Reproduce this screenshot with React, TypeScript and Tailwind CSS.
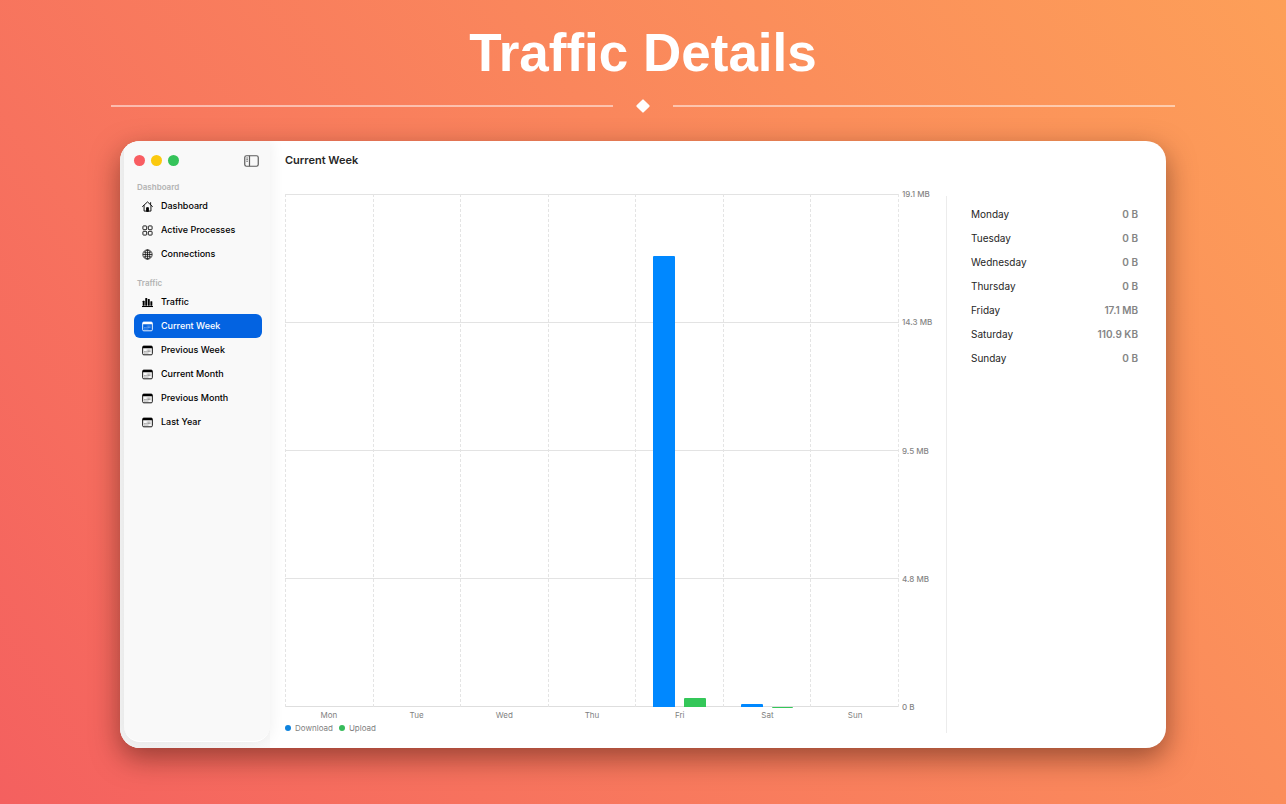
import React, { useState } from 'react';

type IconProps = { className?: string };

const HomeIcon: React.FC<IconProps> = ({ className }) => (
    <svg viewBox="0 0 24 24" className={className} fill="none" stroke="currentColor" strokeWidth="2" strokeLinecap="round" strokeLinejoin="round" aria-hidden="true">
        <path d="M1.2 12 12 2 22.8 12" />
        <path d="M4.5 10v12h15V10" />
        <path d="M18.8 7.5V3.5" />
        <path d="M10 22v-7.5h4V22z" fill="currentColor" />
    </svg>
);

const GridIcon: React.FC<IconProps> = ({ className }) => (
    <svg viewBox="0 0 24 24" className={className} fill="none" stroke="currentColor" strokeWidth="1.9" aria-hidden="true">
        <rect x="2" y="2" width="8.2" height="8.2" rx="1.5" />
        <rect x="13.8" y="2" width="8.2" height="8.2" rx="1.5" />
        <rect x="2" y="13.8" width="8.2" height="8.2" rx="1.5" />
        <rect x="13.8" y="13.8" width="8.2" height="8.2" rx="1.5" />
    </svg>
);

const GlobeIcon: React.FC<IconProps> = ({ className }) => (
    <svg viewBox="0 0 24 24" className={className} fill="none" stroke="currentColor" strokeWidth="1.6" aria-hidden="true">
        <circle cx="12" cy="12" r="10.2" />
        <ellipse cx="12" cy="12" rx="5" ry="10" />
        <path d="M2 12h20M12 2v20M4 6.5c4.5 2.5 11.5 2.5 16 0M4 17.5c4.5-2.5 11.5-2.5 16 0" />
    </svg>
);

const BarsIcon: React.FC<IconProps> = ({ className }) => (
    <svg viewBox="0 0 24 24" className={className} fill="currentColor" aria-hidden="true">
        <rect x="1.5" y="8" width="4.2" height="11" rx="1" />
        <rect x="7.1" y="2" width="4.2" height="17" rx="1" />
        <rect x="12.7" y="4.5" width="4.2" height="14.5" rx="1" />
        <rect x="18.3" y="9" width="4.2" height="10" rx="1" />
        <rect x="0" y="19.5" width="24" height="2.4" />
    </svg>
);

const CalendarIcon: React.FC<IconProps> = ({ className }) => (
    <svg viewBox="0 0 24 24" className={className} fill="none" aria-hidden="true">
        <rect x="1.4" y="2.4" width="21.2" height="19" rx="2.5" stroke="currentColor" strokeWidth="2" />
        <path d="M1.4 7V4.9a2.5 2.5 0 0 1 2.5-2.5h16.2a2.5 2.5 0 0 1 2.5 2.5V7z" fill="currentColor" />
        <path d="M10.4 11.2h8.8M5 14.4h14.2M5 17.6h8.8" stroke="currentColor" strokeWidth="2" strokeDasharray="1.9 0.8" opacity="0.5" />
    </svg>
);

const SidebarIcon: React.FC<IconProps> = ({ className }) => (
    <svg viewBox="0 0 30 24" className={className} fill="none" stroke="currentColor" strokeWidth="2.4" aria-hidden="true">
        <rect x="1.5" y="1.5" width="27" height="21" rx="3.5" />
        <path d="M11 1.5v21" />
        <path d="M4.5 6h3.5M4.5 9.3h3.5M4.5 12.6h3.5" strokeWidth="1.6" />
    </svg>
);

const sections = [
    {
        title: 'Dashboard',
        items: [
            { label: 'Dashboard', Icon: HomeIcon },
            { label: 'Active Processes', Icon: GridIcon },
            { label: 'Connections', Icon: GlobeIcon },
        ],
    },
    {
        title: 'Traffic',
        items: [
            { label: 'Traffic', Icon: BarsIcon },
            { label: 'Current Week', Icon: CalendarIcon },
            { label: 'Previous Week', Icon: CalendarIcon },
            { label: 'Current Month', Icon: CalendarIcon },
            { label: 'Previous Month', Icon: CalendarIcon },
            { label: 'Last Year', Icon: CalendarIcon },
        ],
    },
];

// download and upload are percentages of the top of the axis
const days = [
    { name: 'Monday', short: 'Mon', total: '0 B', download: 0, upload: 0 },
    { name: 'Tuesday', short: 'Tue', total: '0 B', download: 0, upload: 0 },
    { name: 'Wednesday', short: 'Wed', total: '0 B', download: 0, upload: 0 },
    { name: 'Thursday', short: 'Thu', total: '0 B', download: 0, upload: 0 },
    { name: 'Friday', short: 'Fri', total: '17.1 MB', download: 88, upload: 1.7 },
    { name: 'Saturday', short: 'Sat', total: '110.9 KB', download: 0.5, upload: 0.05 },
    { name: 'Sunday', short: 'Sun', total: '0 B', download: 0, upload: 0 },
];

const axisLabels = ['19.1 MB', '14.3 MB', '9.5 MB', '4.8 MB', '0 B'];

const Sidebar: React.FC<{ active: string; onSelect: (label: string) => void }> = ({ active, onSelect }) => (
    <aside className="w-[150px] shrink-0 bg-linear-to-r from-[#f3f3f3] to-[#fafafa] pl-1 pb-[6px] flex">
        <div className="flex-1 rounded-b-2xl bg-[#f9f9f9] border-b border-white shadow-[0_0_16px_rgba(0,0,0,0.07)] pl-[10px] pr-2">
            <div className="h-[39px] flex items-center justify-between pr-[3px]">
                <div className="flex gap-[6px]">
                    <button aria-label="Close" className="w-[11px] h-[11px] rounded-full bg-[#f95d62]" />
                    <button aria-label="Minimize" className="w-[11px] h-[11px] rounded-full bg-[#fbc90e]" />
                    <button aria-label="Zoom" className="w-[11px] h-[11px] rounded-full bg-[#35c35a]" />
                </div>
                <button aria-label="Toggle sidebar" className="text-[#5c5c5c]">
                    <SidebarIcon className="w-[15px] h-3" />
                </button>
            </div>
            <nav className="flex flex-col gap-[10px]">
                {sections.map((section) => (
                    <div key={section.title}>
                        <h2 className="h-[14px] pl-[3px] text-[8px] leading-[14px] font-semibold text-[#b3b3b3]">{section.title}</h2>
                        {section.items.map(({ label, Icon }) => (
                            <button
                                key={label}
                                onClick={() => onSelect(label)}
                                className={`w-full h-6 pl-2 flex items-center gap-2 rounded-md text-[9px] font-medium whitespace-nowrap ${label === active ? 'bg-[#0363e1] text-white' : 'text-black'}`}
                            >
                                <Icon className="w-[11px] h-[11px]" />
                                <span>{label}</span>
                            </button>
                        ))}
                    </div>
                ))}
            </nav>
        </div>
    </aside>
);

const TrafficChart: React.FC = () => (
    <div className="flex-1 flex flex-col">
        <div className="flex-1 flex">
            <div className="flex-1 grid">
                {/* Horizontal lines */}
                <div className="col-start-1 row-start-1 flex flex-col border-b border-[#dedede]">
                    {axisLabels.slice(1).map((label) => (
                        <div key={label} className="flex-1 border-t border-[#e3e3e3]" />
                    ))}
                </div>
                {/* Day columns */}
                <div className="col-start-1 row-start-1 grid grid-cols-7 border-r border-dashed border-[#e6e6e6]">
                    {days.map((day) => (
                        <div key={day.name} className="border-l border-dashed border-[#e4e4e4] flex items-end justify-center gap-[9px]">
                            <div className="w-1/4 rounded-t-[1px] bg-[#0088ff]" style={{ height: `${day.download}%` }} />
                            <div className="w-1/4 rounded-t-[1px] bg-[#34c759]" style={{ height: `${day.upload}%` }} />
                        </div>
                    ))}
                </div>
            </div>
            <div className="w-[47px] pl-[3px] flex flex-col justify-between text-[8px] font-medium text-[#858585]">
                {axisLabels.map((label) => (
                    <span key={label} className="h-[10px] -my-[5px] leading-[10px]">{label}</span>
                ))}
            </div>
        </div>
        <div className="h-4 pr-[47px] grid grid-cols-7 text-center text-[8px] leading-4 text-[#7f7f7f]">
            {days.map((day) => (
                <span key={day.name}>{day.short}</span>
            ))}
        </div>
        <div className="h-[10px] mb-[2px] flex items-center gap-[6px] text-[8px] leading-[10px] text-[#7f7f7f]">
            <span className="flex items-center gap-1">
                <i className="w-[6px] h-[6px] rounded-full bg-[#0f83dd]" />
                Download
            </span>
            <span className="flex items-center gap-1">
                <i className="w-[6px] h-[6px] rounded-full bg-[#37bb5b]" />
                Upload
            </span>
        </div>
    </div>
);

const DayTotals: React.FC = () => (
    <div className="w-[220px] shrink-0 mt-[2px] mb-[2px] pt-[6px] pl-6 pr-7 border-l border-[#ececec]">
        <table className="w-full text-[10px]">
            <tbody>
                {days.map((day) => (
                    <tr key={day.name} className="h-6">
                        <th scope="row" className="text-left font-normal text-[#262626]">{day.name}</th>
                        <td className="text-right font-semibold text-[#858585]">{day.total}</td>
                    </tr>
                ))}
            </tbody>
        </table>
    </div>
);

const App: React.FC = () => {
    const [active, setActive] = useState('Current Week');

    return (
        <div className="min-h-screen flex flex-col px-[111px] pb-14 bg-linear-55 from-[#f4605f] to-[#fd9f58] font-['Inter',sans-serif]">
            <h1 className="pt-[23px] text-center text-[53px] leading-[60px] font-bold text-white font-['Liberation_Sans',sans-serif]">Traffic Details</h1>
            <div className="h-[46px] flex items-center gap-[25px]">
                <div className="flex-1 h-[2px] bg-white/50" />
                <div className="w-[10px] h-[10px] rotate-45 rounded-[1px] bg-white" />
                <div className="flex-1 h-[2px] bg-white/50" />
            </div>

            <div className="flex-1 mt-3 mx-[9px] flex rounded-[20px] overflow-hidden bg-white shadow-[0_10px_28px_rgba(60,20,10,0.5)]">
                <Sidebar active={active} onSelect={setActive} />
                <main className="flex-1 flex flex-col pl-[15px]">
                    <header className="h-[39px] flex items-center">
                        <h2 className="text-[11px] font-semibold text-[#262626]">{active}</h2>
                    </header>
                    <div className="flex-1 flex pt-[14px] pb-[13px]">
                        <TrafficChart />
                        <DayTotals />
                    </div>
                </main>
            </div>
        </div>
    );
};

export default App;
